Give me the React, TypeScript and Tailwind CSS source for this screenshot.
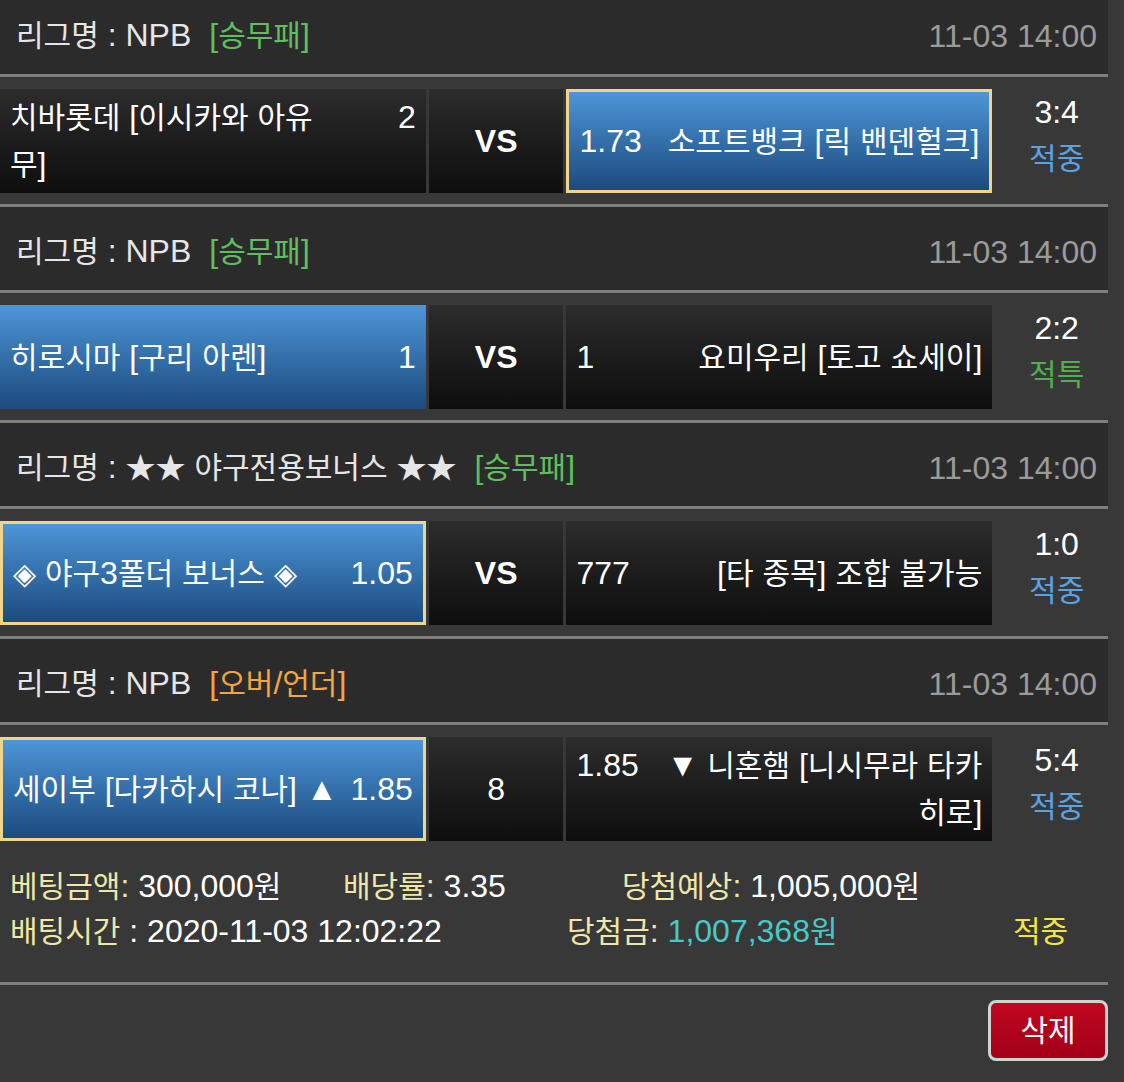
import React from "react";

const SPLIT = /([\u1100-\u11FF\u3130-\u318F\uAC00-\uD7AF\u2605\u25C8]+)/;
const TEST = /[\u1100-\u11FF\u3130-\u318F\uAC00-\uD7AF\u2605\u25C8]/;

function T({ s }: { s: string }) {
  return (
    <>
      {s.split(SPLIT).map((p, i) =>
        p === "" ? null : TEST.test(p) ? (
          <span key={i} className="text-[0.9375em]">
            {p}
          </span>
        ) : (
          <React.Fragment key={i}>{p}</React.Fragment>
        )
      )}
    </>
  );
}

type Kind = "dark" | "blue" | "sel";

const kindClass: Record<Kind, string> = {
  dark: "bg-linear-to-b from-[#2c2c2c] to-[#0e0e0e]",
  blue: "bg-linear-to-b from-[#4e96d9] to-[#1c4b7e]",
  sel: "bg-linear-to-b from-[#4e96d9] to-[#1c4b7e] border-[3px] border-[#f0d58a]",
};

type Game = {
  league: string;
  type: string;
  typeColor: string;
  left: { name: string; odds: string; kind: Kind };
  mid: string;
  midBold: boolean;
  right: { name: string; odds: string; kind: Kind };
  score: string;
  result: string;
  resultColor: string;
};

const games: Game[] = [
  {
    league: "NPB",
    type: "[승무패]",
    typeColor: "text-[#5fbf5f]",
    left: { name: "치바롯데 [이시카와 아유무]", odds: "2", kind: "dark" },
    mid: "VS",
    midBold: true,
    right: { name: "소프트뱅크 [릭 밴덴헐크]", odds: "1.73", kind: "sel" },
    score: "3:4",
    result: "적중",
    resultColor: "text-[#5ba3e0]",
  },
  {
    league: "NPB",
    type: "[승무패]",
    typeColor: "text-[#5fbf5f]",
    left: { name: "히로시마 [구리 아렌]", odds: "1", kind: "blue" },
    mid: "VS",
    midBold: true,
    right: { name: "요미우리 [토고 쇼세이]", odds: "1", kind: "dark" },
    score: "2:2",
    result: "적특",
    resultColor: "text-[#4cb04c]",
  },
  {
    league: "★★ 야구전용보너스 ★★",
    type: "[승무패]",
    typeColor: "text-[#5fbf5f]",
    left: { name: "◈ 야구3폴더 보너스 ◈", odds: "1.05", kind: "sel" },
    mid: "VS",
    midBold: true,
    right: { name: "[타 종목] 조합 불가능", odds: "777", kind: "dark" },
    score: "1:0",
    result: "적중",
    resultColor: "text-[#5ba3e0]",
  },
  {
    league: "NPB",
    type: "[오버/언더]",
    typeColor: "text-[#f2a540]",
    left: { name: "세이부 [다카하시 코나] ▲", odds: "1.85", kind: "sel" },
    mid: "8",
    midBold: false,
    right: { name: "▼ 니혼햄 [니시무라 타카히로]", odds: "1.85", kind: "dark" },
    score: "5:4",
    result: "적중",
    resultColor: "text-[#5ba3e0]",
  },
];

function Line() {
  return <div className="h-[3px] bg-[#7f7f7f]" />;
}

function GameBlock({ g, last }: { g: Game; last: boolean }) {
  return (
    <>
      <div className="flex h-[83px] items-center justify-between bg-[#2b2b2b] pt-[6px] pl-[16px] pr-[11px] leading-[46px]">
        <div className="text-[#e6e6e6]">
          <T s={`리그명 : ${g.league}`} />
          <span className={`ml-[18px] ${g.typeColor}`}>
            <T s={g.type} />
          </span>
        </div>
        <div className="text-[#9b9b9b]">11-03 14:00</div>
      </div>
      <Line />
      <div className="flex gap-[3px] pt-[12px] pb-[11px]">
        <div className={`flex h-[104px] w-[427px] items-center px-[10px] text-white ${kindClass[g.left.kind]}`}>
          <div className="flex w-full items-start leading-[46px]">
            <div className="w-[334px]">
              <T s={g.left.name} />
            </div>
            <div className="flex-1 text-right">{g.left.odds}</div>
          </div>
        </div>
        <div
          className={`flex h-[104px] w-[135px] items-center justify-center text-white ${kindClass.dark} ${
            g.midBold ? "font-bold" : "font-normal"
          }`}
        >
          {g.mid}
        </div>
        <div className={`flex h-[104px] w-[427px] items-center px-[10px] text-white ${kindClass[g.right.kind]}`}>
          <div className="flex w-full items-start leading-[46px]">
            <div className="flex-1 text-left">{g.right.odds}</div>
            <div className="w-[322px] text-right">
              <T s={g.right.name} />
            </div>
          </div>
        </div>
        <div className="w-[113px] pl-[10px] text-center leading-[46px]">
          <div className="text-white">{g.score}</div>
          <div className={g.resultColor}>
            <T s={g.result} />
          </div>
        </div>
      </div>
      {!last && <Line />}
    </>
  );
}

export default function App() {
  return (
    <div className="min-h-[1082px] w-[1124px] overflow-hidden bg-[#383838] font-['Liberation_Sans','Noto_Sans_CJK_KR',sans-serif] text-[32px]">
      <div className="-mt-[9px] w-[1108px]">
        {games.map((g, i) => (
          <GameBlock key={i} g={g} last={i === games.length - 1} />
        ))}
        <div className="pt-[12px] pb-[28px] leading-[45px]">
          <div className="flex pl-[10px]">
            <div className="w-[333px]">
              <span className="text-[#efe7a8]">
                <T s="베팅금액:" />
              </span>
              <span className="text-white">
                <T s=" 300,000원" />
              </span>
            </div>
            <div className="w-[279px]">
              <span className="text-[#efe7a8]">
                <T s="배당률:" />
              </span>
              <span className="text-white"> 3.35</span>
            </div>
            <div>
              <span className="text-[#efe7a8]">
                <T s="당첨예상:" />
              </span>
              <span className="text-white">
                <T s=" 1,005,000원" />
              </span>
            </div>
          </div>
          <div className="flex pl-[10px]">
            <div className="w-[557px]">
              <span className="text-[#efe7a8]">
                <T s="배팅시간 " />
              </span>
              <span className="text-white">: 2020-11-03 12:02:22</span>
            </div>
            <div className="w-[446px]">
              <span className="text-[#efe7a8]">
                <T s="당첨금:" />
              </span>
              <span className="text-[#48c9c9]">
                <T s=" 1,007,368원" />
              </span>
            </div>
            <div className="text-[#f3e445]">
              <T s="적중" />
            </div>
          </div>
        </div>
        <Line />
        <div className="flex justify-end pt-[15px]">
          <button className="flex h-[61px] w-[120px] items-center justify-center rounded-[8px] border-[3px] border-[#d2d2d2] bg-linear-to-b from-[#c0081f] to-[#a30019] text-white leading-none">
            <T s="삭제" />
          </button>
        </div>
      </div>
    </div>
  );
}
